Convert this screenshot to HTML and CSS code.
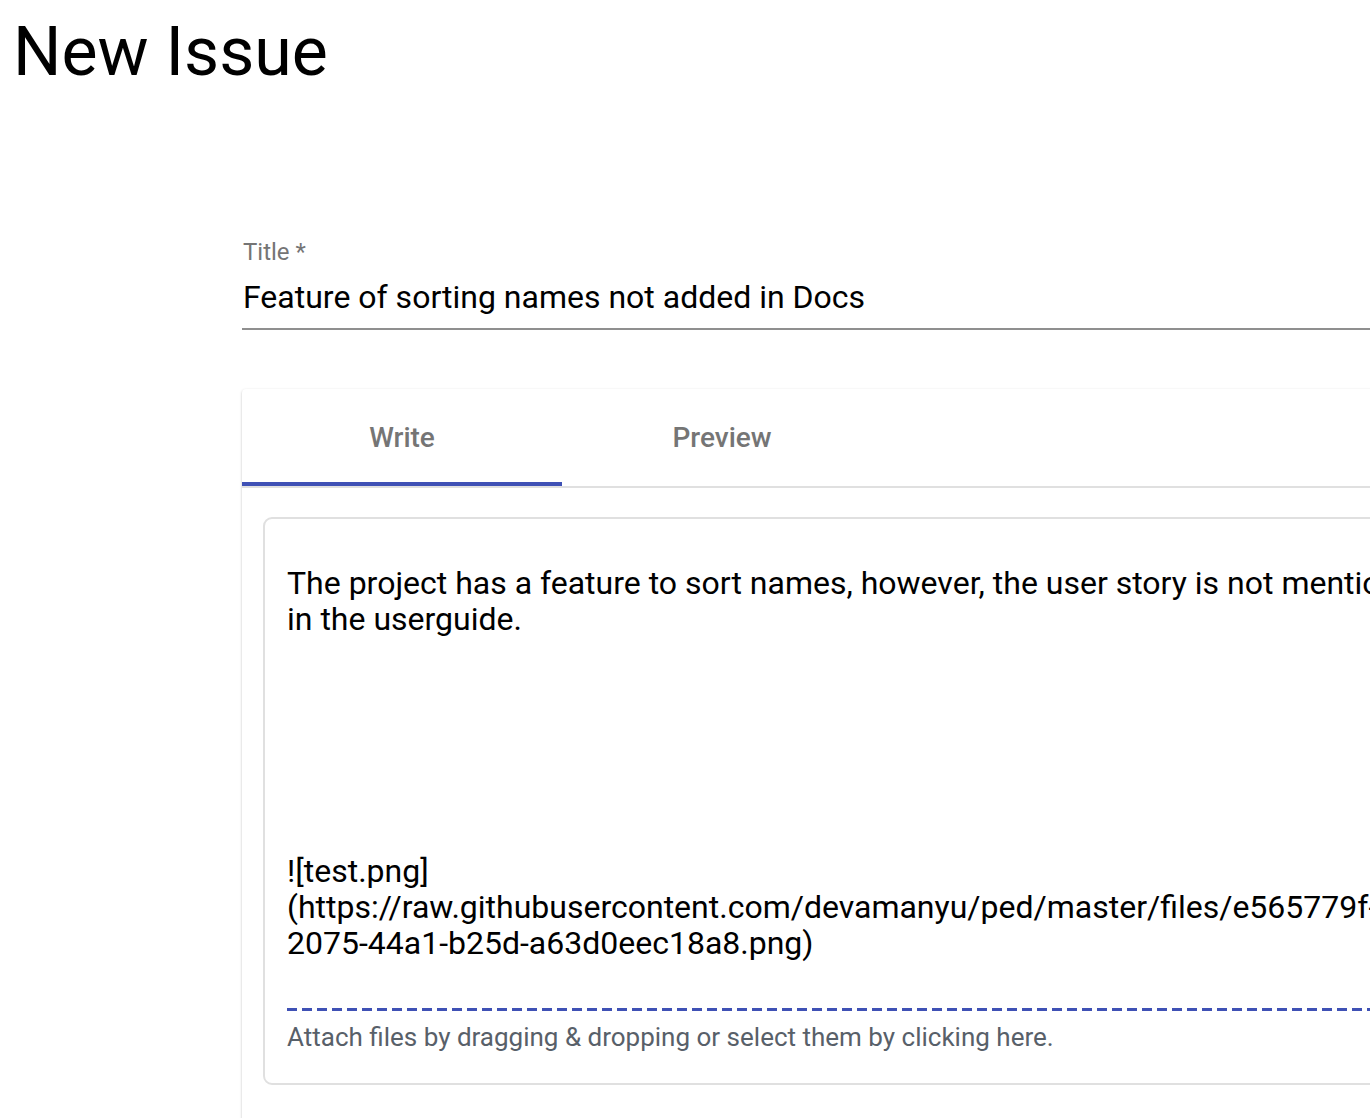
FILE: index.html
```html
<!DOCTYPE html>
<html lang="en">
<head>
<meta charset="utf-8">
<title>New Issue</title>
<link rel="stylesheet" href="styles.css">
</head>
<body>
<h1 class="page-title">New Issue</h1>
<main class="form">
  <div class="field">
    <label class="field-label">Title *</label>
    <div class="field-input">Feature of sorting names not added in Docs</div>
  </div>
  <section class="card">
    <nav class="tabs">
      <div class="tab tab-active">Write</div>
      <div class="tab">Preview</div>
    </nav>
    <div class="card-body">
      <div class="editor">
        <div class="editor-text">The project has a feature to sort names, however, the user story is not mentioned
in the userguide.






![test.png]
(https://raw.githubusercontent.com/devamanyu/ped/master/files/e565779f-
2075-44a1-b25d-a63d0eec18a8.png)</div>
        <div class="dropzone">Attach files by dragging &amp; dropping or select them by clicking here.</div>
      </div>
    </div>
  </section>
</main>
</body>
</html>
```

FILE: styles.css
```css
html, body {
  margin: 0;
  padding: 0;
  overflow: hidden;
  background: #ffffff;
}

body {
  font-family: Roboto, "Liberation Sans", Arial, sans-serif;
  color: #000000;
  width: 1370px;
}

.page-title {
  margin: 11px 0 0 13px;
  font-size: 68px;
  font-weight: 400;
  line-height: 82px;
  height: 82px;
  letter-spacing: 0;
}

.form {
  margin-left: 242px;
  margin-top: 145px;
  width: 1700px;
}

.field {
  display: flex;
  flex-direction: column;
}

.field-label {
  font-size: 24px;
  line-height: 28px;
  color: #757575;
  padding-left: 1px;
}

.field-input {
  font-size: 32px;
  line-height: 36px;
  padding: 13px 0 13px 1px;
  border-bottom: 2px solid #8f8f8f;
}

.card {
  margin-top: 59px;
  background: #ffffff;
  box-shadow: 0 1px 3px rgba(0, 0, 0, 0.2), 0 1px 1px rgba(0, 0, 0, 0.12);
  border-radius: 4px;
}

.tabs {
  display: flex;
  border-bottom: 2px solid #e0e0e0;
}

.tab {
  width: 320px;
  box-sizing: border-box;
  text-align: center;
  font-size: 28px;
  font-weight: 500;
  color: #757575;
  padding: 32px 0 27px;
  line-height: 34px;
  border-bottom: 4px solid transparent;
}

.tab-active {
  border-bottom-color: #3f51b5;
}

.card-body {
  padding: 29px 0 40px 21px;
}

.editor {
  border: 2px solid #e0e0e0;
  border-radius: 9px;
  padding: 46px 0 31px 22px;
}

.editor-text {
  white-space: pre;
  font-size: 32px;
  line-height: 36px;
  color: #000000;
  padding-bottom: 47px;
}

.dropzone {
  padding-top: 14px;
  font-size: 26px;
  line-height: 30px;
  color: #586069;
  background: repeating-linear-gradient(to right, #3f51b5 0 10px, transparent 10px 15px) top left / 100% 3px no-repeat;
}
```
